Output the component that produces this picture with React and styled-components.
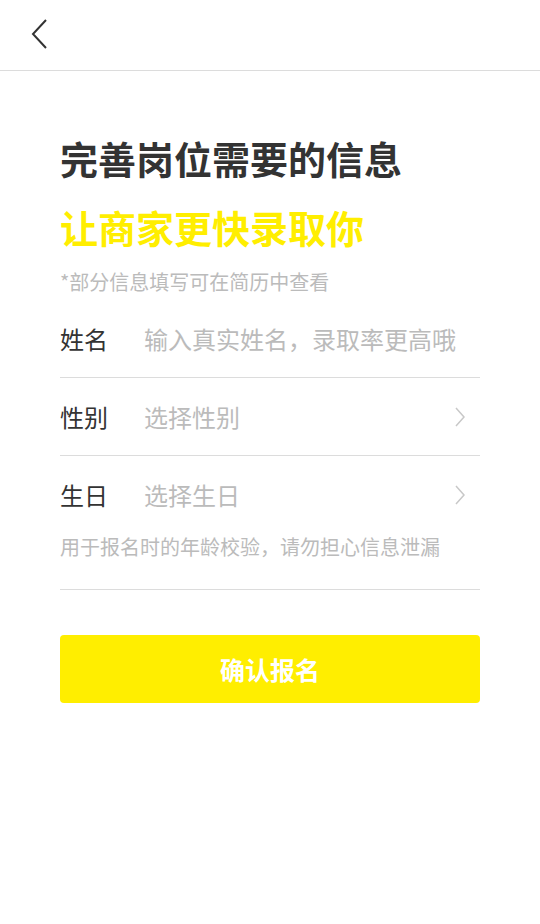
import React from 'react';
import styled, { createGlobalStyle } from 'styled-components';

const GlobalStyle = createGlobalStyle`
    html, body {
        margin: 0;
        padding: 0;
        background: #fff;
        font-family: "Noto Sans CJK SC", "Noto Sans", sans-serif;
    }
`;

const BackIcon = () => (
    <svg width="20" height="32" viewBox="0 0 20 32">
        <path d="M16 2 L3 16 L16 30" fill="none" stroke="#333" strokeWidth="2" />
    </svg>
);

const ArrowIcon = () => (
    <svg width="12" height="20" viewBox="0 0 12 20">
        <path d="M2 1 L10 10 L2 19" fill="none" stroke="#c8c8c8" strokeWidth="1.5" />
    </svg>
);

const App = () => {
    return (
        <STYLE_PAGE>
            <GlobalStyle />
            <STYLE_HEADER>
                <STYLE_BACK>
                    <BackIcon />
                </STYLE_BACK>
            </STYLE_HEADER>
            <STYLE_CONTENT>
                <STYLE_TITLE>完善岗位需要的信息</STYLE_TITLE>
                <STYLE_TITLE yellow>让商家更快录取你</STYLE_TITLE>
                <STYLE_TIP>*部分信息填写可在简历中查看</STYLE_TIP>

                <STYLE_ROW>
                    <STYLE_LINE>
                        <STYLE_LABEL>姓名</STYLE_LABEL>
                        <STYLE_VALUE>输入真实姓名，录取率更高哦</STYLE_VALUE>
                    </STYLE_LINE>
                </STYLE_ROW>
                <STYLE_ROW>
                    <STYLE_LINE>
                        <STYLE_LABEL>性别</STYLE_LABEL>
                        <STYLE_VALUE>选择性别</STYLE_VALUE>
                        <ArrowIcon />
                    </STYLE_LINE>
                </STYLE_ROW>
                <STYLE_ROW hasHint>
                    <STYLE_LINE>
                        <STYLE_LABEL>生日</STYLE_LABEL>
                        <STYLE_VALUE>选择生日</STYLE_VALUE>
                        <ArrowIcon />
                    </STYLE_LINE>
                    <STYLE_HINT>用于报名时的年龄校验，请勿担心信息泄漏</STYLE_HINT>
                </STYLE_ROW>

                <STYLE_BUTTON>确认报名</STYLE_BUTTON>
            </STYLE_CONTENT>
        </STYLE_PAGE>
    );
};

const STYLE_PAGE = styled.div`
    width: 540px;
    min-height: 924px;
    background: #fff;
`;

const STYLE_HEADER = styled.div`
    height: 70px;
    border-bottom: 1px solid #dcdcdc;
    display: flex;
    align-items: center;
    padding-left: 30px;
`;

const STYLE_BACK = styled.div`
    display: flex;
    align-items: center;
    margin-top: -2px;
`;

const STYLE_CONTENT = styled.div`
    padding: 61px 60px 0;
`;

const STYLE_TITLE = styled.h1`
    margin: 0 0 17px;
    font-size: 38px;
    line-height: 52px;
    font-weight: 700;
    color: ${props => (props.yellow ? '#ffee00' : '#333')};
`;

const STYLE_TIP = styled.p`
    margin: -2px 0 4px;
    font-size: 20px;
    line-height: 28px;
    color: #bbb;
`;

const STYLE_ROW = styled.div`
    border-bottom: 1px solid #dcdcdc;
    padding-bottom: ${props => (props.hasHint ? '28px' : '0')};
`;

const STYLE_LINE = styled.div`
    height: 77px;
    display: flex;
    align-items: center;
    padding-right: 14px;
`;

const STYLE_LABEL = styled.span`
    width: 84px;
    font-size: 24px;
    color: #333;
`;

const STYLE_VALUE = styled.span`
    flex: 1;
    font-size: 24px;
    color: #bbb;
`;

const STYLE_HINT = styled.p`
    margin: 0;
    font-size: 20px;
    line-height: 28px;
    color: #bbb;
`;

const STYLE_BUTTON = styled.button`
    display: block;
    width: 100%;
    height: 68px;
    margin-top: 45px;
    border: none;
    border-radius: 4px;
    background: #ffee00;
    color: #fff;
    font-family: "Noto Sans CJK SC", "Noto Sans", sans-serif;
    font-size: 25px;
    font-weight: 700;
`;

export default App;
